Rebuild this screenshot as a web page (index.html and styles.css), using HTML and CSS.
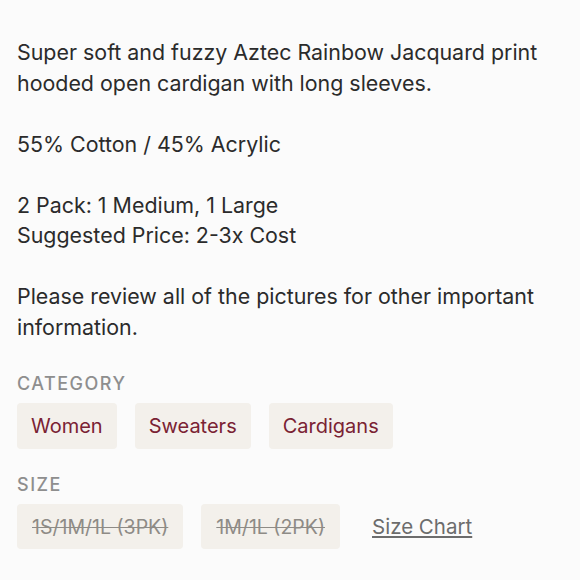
FILE: index.html
```html
<!DOCTYPE html>
<html lang="en">
<head>
<meta charset="utf-8">
<link rel="stylesheet" href="styles.css">
</head>
<body>
<main class="listing">
  <div class="description">
    <p>Super soft and fuzzy Aztec Rainbow Jacquard print hooded open cardigan with long sleeves.</p>
    <p>55% Cotton / 45% Acrylic</p>
    <p>2 Pack: 1 Medium, 1 Large<br>Suggested Price: 2-3x Cost</p>
    <p>Please review all of the pictures for other important information.</p>
  </div>
  <section class="group">
    <h3 class="label">CATEGORY</h3>
    <div class="chips">
      <span class="chip">Women</span>
      <span class="chip">Sweaters</span>
      <span class="chip">Cardigans</span>
    </div>
  </section>
  <section class="group">
    <h3 class="label">SIZE</h3>
    <div class="chips">
      <span class="chip size">1S/1M/1L (3PK)</span>
      <span class="chip size">1M/1L (2PK)</span>
      <a class="size-chart" href="#">Size Chart</a>
    </div>
  </section>
</main>
</body>
</html>
```
FILE: styles.css
```css
html, body {
  margin: 0;
  padding: 0;
  background: #fbfbfb;
}
body {
  font-family: "Inter", "Liberation Sans", sans-serif;
  color: #2b2b2b;
  overflow: hidden;
  height: 580px;
}
.listing {
  padding: 37px 17px 0;
}
.description {
  width: 530px;
}
.description p {
  margin: 0 0 30.5px;
  font-size: 21.4px;
  line-height: 30.5px;
}
.description p:last-child {
  margin-bottom: 0;
}
.group {
  margin-top: 32px;
}
.group + .group {
  margin-top: 26px;
}
.label {
  margin: 0 0 9px;
  font-size: 18px;
  font-weight: 500;
  letter-spacing: 1.5px;
  color: #8e8e8e;
  line-height: 20px;
}
.chips {
  display: flex;
  align-items: center;
  gap: 18px;
}
.chip {
  background: #f3f0eb;
  border-radius: 4px;
  height: 46px;
  padding: 0 14px;
  display: flex;
  align-items: center;
  font-size: 20px;
  color: #7a2233;
}
.chip.size {
  height: 45px;
  padding: 0 15px;
  font-size: 19.5px;
  color: #8e8b86;
  text-decoration: line-through;
}
.size-chart {
  margin-left: 14px;
  font-size: 20.5px;
  color: #6c6c6c;
  text-decoration: underline;
}
```
